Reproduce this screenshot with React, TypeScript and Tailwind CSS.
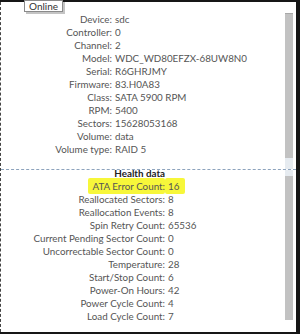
import React from "react";

const top: [string, string][] = [
  ["Device", "sdc"],
  ["Controller", "0"],
  ["Channel", "2"],
  ["Model", "WDC_WD80EFZX-68UW8N0"],
  ["Serial", "R6GHRJMY"],
  ["Firmware", "83.H0A83"],
  ["Class", "SATA 5900 RPM"],
  ["RPM", "5400"],
  ["Sectors", "15628053168"],
  ["Volume", "data"],
  ["Volume type", "RAID 5"],
];

const health: [string, string][] = [
  ["Reallocated Sectors", "8"],
  ["Reallocation Events", "8"],
  ["Spin Retry Count", "65536"],
  ["Current Pending Sector Count", "0"],
  ["Uncorrectable Sector Count", "0"],
  ["Temperature", "28"],
  ["Start/Stop Count", "6"],
  ["Power-On Hours", "42"],
  ["Power Cycle Count", "4"],
  ["Load Cycle Count", "7"],
];

export default function App() {
  return (
    <div className="w-[300px] h-[334px] bg-[#161616] pt-[2px] pb-[2px] pr-[4px] flex font-['Lato',sans-serif]">
      <div className="flex-1 bg-white border-l border-dashed border-[#444] flex flex-col relative">
        <div className="absolute left-[23px] top-[-2px] h-[12px] px-[4px] bg-white border border-[#8a8a8a] shadow-[2px_2px_0_#c4c4c4] text-[10px] leading-[10px] text-[#333] flex items-center">
          Online
        </div>
        <div className="h-[167px] flex">
          <div className="flex-1 pt-[11px] grid grid-cols-[111px_1fr] content-start gap-x-[3px] text-[9.8px] leading-[13px] text-[#555]">
            {top.map(([k, v]) => (
              <React.Fragment key={k}>
                <div className="text-right whitespace-nowrap">{k}:</div>
                <div className="whitespace-nowrap">{v}</div>
              </React.Fragment>
            ))}
          </div>
          <div className="w-[8px] mr-[3px] flex flex-col">
            <div className="mt-[11px] h-[145px] bg-[#c2c2c2] border-t border-[#a8a8a8]" />
            <div className="flex-1 bg-[#e6ebf0]" />
          </div>
        </div>
        <div className="border-t border-dashed border-[#8da3bd]" />
        <div className="flex-1 flex">
          <div className="flex-1 mt-[-3px] grid grid-cols-[164px_1fr] content-start gap-x-[3px] text-[9.8px] leading-[13px] text-[#555]">
            <div className="text-right whitespace-nowrap font-bold text-[#222]">Health data</div>
            <div />
            <div className="text-right whitespace-nowrap">
              <span className="bg-[#f7f73a] rounded-[2px] py-[2px] pl-[4px]">ATA Error Count:</span>
            </div>
            <div className="whitespace-nowrap">
              <span className="bg-[#f7f73a] rounded-[2px] py-[2px] pr-[6px] ml-[-3px] pl-[3px]">16</span>
            </div>
            {health.map(([k, v]) => (
              <React.Fragment key={k}>
                <div className="text-right whitespace-nowrap">{k}:</div>
                <div className="whitespace-nowrap">{v}</div>
              </React.Fragment>
            ))}
          </div>
          <div className="w-[8px] mr-[3px] flex flex-col">
            <div className="h-[6px] bg-[#e6ebf0]" />
            <div className="h-[144px] bg-[#c2c2c2]" />
          </div>
        </div>
      </div>
    </div>
  );
}
